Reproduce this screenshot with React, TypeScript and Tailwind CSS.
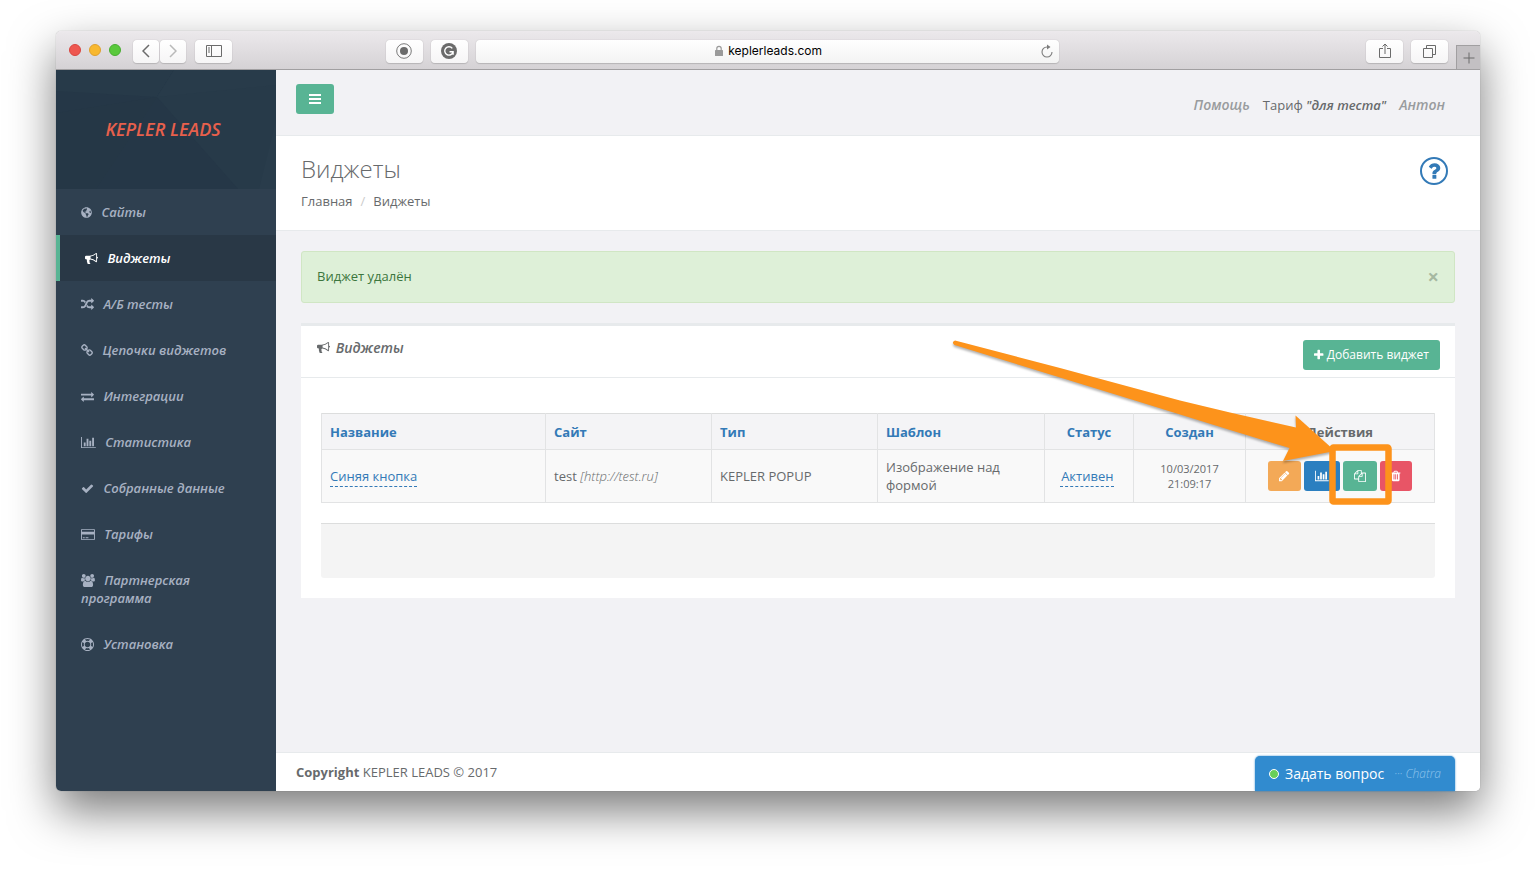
import type { ReactNode } from "react";
import { FaGlobeAmericas } from "react-icons/fa";

const icons = {
  bullhorn: {
    box: "0 0 1792 1792",
    d: "M1664 640q53 0 90.5 37.5t37.5 90.5-37.5 90.5-90.5 37.5v384q0 52-38 90t-90 38q-417-347-812-380-58 19-91 66t-31 100.5 40 92.5q-20 33-23 65.5t6 58 33.5 55 48 50 61.5 50.5q-29 58-111.5 83t-168.5 11.5-132-55.5q-7-23-29.5-87.5t-32-94.5-23-89-15-101 3.5-98.5 22-110.5h-122q-66 0-113-47t-47-113v-192q0-66 47-113t113-47h480q435 0 896-384 52 0 90 38t38 90v384zm-128 604v-954q-394 302-768 343v270q377 42 768 341z",
  },
  random: {
    box: "0 0 1792 1792",
    d: "M666 481q-60 92-137 273-22-45-37-72.5t-40.5-63.5-51-56.5-63-35-81.5-14.5h-224q-14 0-23-9t-9-23v-192q0-14 9-23t23-9h224q250 0 410 225zm1126 799q0 14-9 23l-320 320q-9 9-23 9-13 0-22.5-9.5t-9.5-22.5v-192q-32 0-85 .5t-81 1-73-1-71-5-64-10.5-63-18.5-58-28.5-59-40-55-53.5-56-69.5q59-93 136-273 22 45 37 72.5t40.5 63.5 51 56.5 63 35 81.5 14.5h256v-192q0-14 9-23t23-9q12 0 24 10l319 319q9 9 9 23zm0-896q0 14-9 23l-320 320q-9 9-23 9-13 0-22.5-9.5t-9.5-22.5v-192h-256q-48 0-87 15t-69 45-51 61.5-45 77.5q-32 62-78 171-29 66-49.5 111t-54 105-64 100-74 83-90 68.5-106.5 42-128 16.5h-224q-14 0-23-9t-9-23v-192q0-14 9-23t23-9h224q48 0 87-15t69-45 51-61.5 45-77.5q32-62 78-171 29-66 49.5-111t54-105 64-100 74-83 90-68.5 106.5-42 128-16.5h256v-192q0-14 9-23t23-9q12 0 24 10l319 319q9 9 9 23z",
  },
  chain: {
    box: "64 0 1664 1792",
    d: "M1520 1216q0-40-28-68l-208-208q-28-28-68-28-42 0-72 32 3 3 19 18.5t21.5 21.5 15 19 13 25.5 3.5 27.5q0 40-28 68t-68 28q-15 0-27.5-3.5t-25.5-13-19-15-21.5-21.5-18.5-19q-33 31-33 73 0 40 28 68l206 207q27 27 68 27 40 0 68-26l147-146q28-28 28-67zm-703-705q0-40-28-68l-206-207q-28-28-68-28-39 0-68 27l-147 146q-28 28-28 67 0 40 28 68l208 208q27 27 68 27 42 0 72-31-3-3-19-18.5t-21.5-21.5-15-19-13-25.5-3.5-27.5q0-40 28-68t68-28q15 0 27.5 3.5t25.5 13 19 15 21.5 21.5 18.5 19q33-31 33-73zm895 705q0 120-85 203l-147 146q-83 83-203 83-121 0-204-85l-206-207q-83-83-83-203 0-123 88-209l-88-88q-86 88-208 88-120 0-204-84l-208-208q-84-84-84-204t85-203l147-146q83-83 203-83 121 0 204 85l206 207q83 83 83 203 0 123-88 209l88 88q86-88 208-88 120 0 204 84l208 208q84 84 84 204z",
  },
  exchange: {
    box: "0 0 1792 1792",
    d: "M1792 1184v192q0 13-9.5 22.5t-22.5 9.5h-1376v192q0 13-9.5 22.5t-22.5 9.5q-12 0-24-10l-319-320q-9-9-9-22 0-14 9-23l320-320q9-9 23-9 13 0 22.5 9.5t9.5 22.5v192h1376q13 0 22.5 9.5t9.5 22.5zm0-544q0 14-9 23l-320 320q-9 9-23 9-13 0-22.5-9.5t-9.5-22.5v-192h-1376q-13 0-22.5-9.5t-9.5-22.5v-192q0-13 9.5-22.5t22.5-9.5h1376v-192q0-14 9-23t23-9q12 0 24 10l319 319q9 9 9 23z",
  },
  chart: {
    box: "0 0 2048 1792",
    d: "M640 896v512h-256v-512h256zm384-512v1024h-256v-1024h256zm1024 1152v128h-2048v-1536h128v1408h1920zm-640-896v768h-256v-768h256zm384-384v1152h-256v-1152h256z",
  },
  check: {
    box: "0 0 1792 1792",
    d: "M1671 566q0 40-28 68l-724 724-136 136q-28 28-68 28t-68-28l-136-136-362-362q-28-28-28-68t28-68l136-136q28-28 68-28t68 28l294 295 656-657q28-28 68-28t68 28l136 136q28 28 28 68z",
  },
  card: {
    box: "0 0 1920 1792",
    d: "M1760 128q66 0 113 47t47 113v1216q0 66-47 113t-113 47h-1600q-66 0-113-47t-47-113v-1216q0-66 47-113t113-47h1600zm-1600 128q-13 0-22.5 9.5t-9.5 22.5v224h1664v-224q0-13-9.5-22.5t-22.5-9.5h-1600zm1600 1280q13 0 22.5-9.5t9.5-22.5v-608h-1664v608q0 13 9.5 22.5t22.5 9.5h1600zm-1504-128v-128h256v128h-256zm384 0v-128h384v128h-384z",
  },
  users: {
    box: "0 0 1920 1792",
    d: "M593 896q-162 5-265 128h-134q-82 0-138-40.5t-56-118.5q0-353 124-353 6 0 43.5 21t97.5 42.5 119 21.5q67 0 133-23-5 37-5 66 0 139 81 256zm1071 637q0 120-73 189.5t-194 69.5h-874q-121 0-194-69.5t-73-189.5q0-53 3.5-103.5t14-109 26.5-108.5 43-97.5 62-81 85.5-53.5 111.5-20q10 0 43 21.5t73 48 107 48 135 21.5 135-21.5 107-48 73-48 43-21.5q61 0 111.5 20t85.5 53.5 62 81 43 97.5 26.5 108.5 14 109 3.5 103.5zm-1024-1277q0 106-75 181t-181 75-181-75-75-181 75-181 181-75 181 75 75 181zm704 384q0 159-112.5 271.5t-271.5 112.5-271.5-112.5-112.5-271.5 112.5-271.5 271.5-112.5 271.5 112.5 112.5 271.5zm576 225q0 78-56 118.5t-138 40.5h-134q-103-123-265-128 81-117 81-256 0-29-5-66 66 23 133 23 59 0 119-21.5t97.5-42.5 43.5-21q124 0 124 353zm-128-609q0 106-75 181t-181 75-181-75-75-181 75-181 181-75 181 75 75 181z",
  },
  ring: {
    box: "0 0 1792 1792",
    d: "M896 0q182 0 348 71t286 191 191 286 71 348-71 348-191 286-286 191-348 71-348-71-286-191-191-286-71-348 71-348 191-286 286-191 348-71zm0 128q-190 0-361 90l194 194q82-28 167-28t167 28l194-194q-171-90-361-90zm-678 1129l194-194q-28-82-28-167t28-167l-194-194q-90 171-90 361t90 361zm678 407q190 0 361-90l-194-194q-82 28-167 28t-167-28l-194 194q171 90 361 90zm0-384q159 0 271.5-112.5t112.5-271.5-112.5-271.5-271.5-112.5-271.5 112.5-112.5 271.5 112.5 271.5 271.5 112.5zm484-217l194 194q90-171 90-361t-90-361l-194 194q28 82 28 167t-28 167z",
  },
  pencil: {
    box: "128 0 1536 1792",
    d: "M491 1536l91-91-235-235-91 91v107h128v128h107zm523-928q0-22-22-22-10 0-17 7l-542 542q-7 7-7 17 0 22 22 22 10 0 17-7l542-542q7-7 7-17zm-54-192l416 416-832 832h-416v-416zm683 96q0 53-37 90l-166 166-416-416 166-165q36-38 90-38 53 0 91 38l235 234q37 39 37 91z",
  },
  files: {
    box: "0 0 1792 1792",
    d: "M1696 384q40 0 68 28t28 68v1216q0 40-28 68t-68 28h-960q-40 0-68-28t-28-68v-288h-544q-40 0-68-28t-28-68v-672q0-40 20-88t48-76l408-408q28-28 76-48t88-20h416q40 0 68 28t28 68v328q68-40 128-40h416zm-544 213l-299 299h299v-299zm-640-384l-299 299h299v-299zm196 647l316-316v-416h-384v416q0 40-28 68t-68 28h-416v640h512v-256q0-40 20-88t48-76zm956 804v-1152h-384v416q0 40-28 68t-68 28h-416v640h896z",
  },
  trash: {
    box: "192 0 1408 1792",
    d: "M704 1376v-704q0-14-9-23t-23-9h-64q-14 0-23 9t-9 23v704q0 14 9 23t23 9h64q14 0 23-9t9-23zm256 0v-704q0-14-9-23t-23-9h-64q-14 0-23 9t-9 23v704q0 14 9 23t23 9h64q14 0 23-9t9-23zm256 0v-704q0-14-9-23t-23-9h-64q-14 0-23 9t-9 23v704q0 14 9 23t23 9h64q14 0 23-9t9-23zm-544-992h448l-48-117q-7-9-17-11h-317q-10 2-17 11zm928 32v64q0 14-9 23t-23 9h-96v948q0 83-47 143.5t-113 60.5h-832q-66 0-113-58.5t-47-141.5v-952h-96q-14 0-23-9t-9-23v-64q0-14 9-23t23-9h309l70-167q15-37 54-63t79-26h320q40 0 79 26t54 63l70 167h309q14 0 23 9t9 23z",
  },
  plus: {
    box: "192 0 1408 1792",
    d: "M1600 736v192q0 40-28 68t-68 28h-416v416q0 40-28 68t-68 28h-192q-40 0-68-28t-28-68v-416h-416q-40 0-68-28t-28-68v-192q0-40 28-68t68-28h416v-416q0-40 28-68t68-28h192q40 0 68 28t28 68v416h416q40 0 68 28t28 68z",
  },
  question: {
    box: "0 0 1792 1792",
    d: "M1088 1256v240q0 16-12 28t-28 12h-240q-16 0-28-12t-12-28v-240q0-16 12-28t28-12h240q16 0 28 12t12 28zm316-600q0 54-15.5 101t-35 76.5-55 59.5-57.5 43.5-61 35.5q-41 23-68.5 65t-27.5 67q0 17-12 32.5t-28 15.5h-240q-15 0-25.5-18.5t-10.5-37.5v-45q0-83 65-156.5t143-108.5q59-27 84-56t25-76q0-42-46.5-74t-107.5-32q-65 0-108 29-35 25-107 115-13 16-31 16-12 0-25-8l-164-125q-13-10-15.5-25t5.500-28q160-266 464-266 80 0 161 31t146 83 106 127.5 41 158.5z",
  },
};

type IconName = keyof typeof icons;

function Icon({ name, className }: { name: IconName; className: string }) {
  return (
    <svg viewBox={icons[name].box} fill="currentColor" className={className} aria-hidden="true">
      <path d={icons[name].d} />
    </svg>
  );
}

const menu: { label: string; icon?: IconName }[] = [
  { label: "Сайты" },
  { label: "Виджеты", icon: "bullhorn" },
  { label: "А/Б тесты", icon: "random" },
  { label: "Цепочки виджетов", icon: "chain" },
  { label: "Интеграции", icon: "exchange" },
  { label: "Статистика", icon: "chart" },
  { label: "Собранные данные", icon: "check" },
  { label: "Тарифы", icon: "card" },
  { label: "Партнерская программа", icon: "users" },
  { label: "Установка", icon: "ring" },
];

function BarButton({ label, className, children }: { label: string; className: string; children: ReactNode }) {
  return (
    <button
      aria-label={label}
      className={`flex h-[23px] shrink-0 items-center justify-center rounded bg-gradient-to-b from-white to-[#f6f5f6] text-[#6b6b6b] shadow-[0_0_1px_#a9a7a9,0_1px_1px_#b9b7b9] ${className}`}
    >
      {children}
    </button>
  );
}

function BrowserBar() {
  return (
    <div className="flex h-[39px] items-center rounded-t-[5px] border-b border-[#a19fa1] bg-gradient-to-b from-[#ece9ec] to-[#d5d2d5] pt-0.5 pl-[13px]">
      <div className="flex gap-2 pb-0.5">
        <span className="size-3 rounded-full border border-[#d9453f] bg-[#ee5750]" />
        <span className="size-3 rounded-full border border-[#e0a02c] bg-[#f8b82f]" />
        <span className="size-3 rounded-full border border-[#48ad31] bg-[#5ac93c]" />
      </div>
      <div className="ml-3 flex gap-px">
        <BarButton label="Назад" className="w-[26px]">
          <svg viewBox="0 0 8 14" className="h-3.5 w-2" fill="none" stroke="currentColor" strokeWidth="1.500">
            <path d="M7 1L1 7l6 6" />
          </svg>
        </BarButton>
        <BarButton label="Вперёд" className="w-[26px]">
          <svg viewBox="0 0 8 14" className="h-3.5 w-2" fill="none" stroke="#b9b9b9" strokeWidth="1.500">
            <path d="M1 1l6 6-6 6" />
          </svg>
        </BarButton>
      </div>
      <BarButton label="Боковая панель" className="ml-[9px] w-[37px]">
        <svg viewBox="0 0 16 12" className="h-3 w-4" fill="none" stroke="currentColor">
          <path d="M.5.5h15v11H.5zM5.500 .5v11M2 3h2M2 5h2M2 7h2" />
        </svg>
      </BarButton>

      <div className="flex-1" />

      <BarButton label="Запись" className="w-[37px]">
        <svg viewBox="0 0 16 16" className="size-4">
          <circle cx="8" cy="8" r="7.300" fill="none" stroke="currentColor" strokeWidth=".9" />
          <circle cx="8" cy="8" r="4" fill="currentColor" />
        </svg>
      </BarButton>
      <BarButton label="Grammarly" className="ml-2 w-[37px]">
        <svg viewBox="0 0 16 16" className="size-4" fill="none">
          <circle cx="8" cy="8" r="8" fill="currentColor" />
          <path d="M11.300 5.400A4.200 4.200 0 1 0 12 9M8.500 8.800h3.600v2.900" stroke="#fff" strokeWidth="1.400" />
        </svg>
      </BarButton>
      <div className="ml-2 flex h-[23px] w-[583px] items-center rounded bg-gradient-to-b from-white to-[#f3f3f3] pr-1.5 pl-5 shadow-[0_0_1px_#a9a7a9,0_1px_1px_#b9b7b9]">
        <label className="flex flex-1 items-center justify-center gap-1">
          <svg viewBox="0 0 10 12" className="h-3 w-2.5" fill="#9a9a9a" aria-label="Адрес">
            <rect x="1" y="5" width="8" height="6" rx=".5" />
            <path d="M2.800 5.500V3.500a2.200 2.200 0 0 1 4.400 0v2" fill="none" stroke="#9a9a9a" strokeWidth="1.200" />
          </svg>
          <input
            type="text"
            defaultValue="keplerleads.com"
            className="field-sizing-content bg-transparent font-[Inter,sans-serif] text-[12px] leading-4 text-black outline-none"
          />
        </label>
        <button aria-label="Обновить" className="text-[#7c7c7c]">
          <svg viewBox="0 0 12 14" className="h-3.5 w-3" fill="none" stroke="currentColor" strokeWidth="1.100">
            <path d="M7 3H6a5 5 0 1 0 5 5" />
            <path d="M6 .5L9.500 3 6 5.500z" fill="currentColor" stroke="none" />
          </svg>
        </button>
      </div>

      <div className="flex-[2]" />

      <BarButton label="Поделиться" className="w-[37px]">
        <svg viewBox="0 0 12 16" className="h-4 w-3" fill="none" stroke="currentColor">
          <path d="M4 5.500H.5v9h11v-9H8M6 11V1M3.500 3.500L6 1l2.500 2.500" />
        </svg>
      </BarButton>
      <BarButton label="Все вкладки" className="ml-2 w-[37px]">
        <svg viewBox="0 0 13 13" className="size-[13px]" fill="none" stroke="currentColor">
          <path d="M.5 3.500h9v9h-9zM3.500 3.500v-3h9v9h-3" />
        </svg>
      </BarButton>
      <button
        aria-label="Новая вкладка"
        className="ml-2 flex h-6 w-6 items-center justify-center self-end border-t border-l border-[#a19fa1] bg-[#c3c0c3] text-[#6b6b6b]"
      >
        <svg viewBox="0 0 12 12" className="size-3" fill="none" stroke="currentColor">
          <path d="M6 .5v11M.5 6h11" />
        </svg>
      </button>
    </div>
  );
}

function Sidebar() {
  return (
    <aside className="w-[220px] shrink-0 rounded-bl-[5px] bg-[#2f4050]">
      <div className="relative flex h-[119px] items-center justify-center bg-[#253747]">
        <svg viewBox="0 0 220 119" preserveAspectRatio="none" className="absolute inset-0 size-full" aria-hidden="true">
          <path d="M0 0H118L101 27 0 21z" fill="#273a49" />
          <path d="M118 0H220V119H182L101 27z" fill="#273a49" />
          <path d="M118 0H220V15L101 27z" fill="#283b4a" />
          <path d="M220 50V119H203z" fill="#293c4b" />
          <path d="M0 43L101 27 40 119H0z" fill="#253746" />
        </svg>
        <a href="#" className="relative pr-1.5 pb-0.5 text-[18px] font-semibold text-[#e8604c] italic">
          KEPLER LEADS
        </a>
      </div>
      <nav>
        {menu.map((item) => (
          <a
            key={item.label}
            href="#"
            className={
              item.label === "Виджеты"
                ? "block border-l-4 border-[#58b494] bg-[#293846] py-3.5 pr-5 pl-[25px] font-semibold text-white italic"
                : "block py-3.5 pr-5 pl-[25px] font-semibold text-[#a7b1c2] italic"
            }
          >
            {item.icon ? (
              <Icon name={item.icon} className="mr-1.5 mb-0.5 inline h-[13px] w-auto" />
            ) : (
              <FaGlobeAmericas className="mr-1.5 mb-0.5 inline h-[11px] w-[11px]" />
            )}{" "}
            {item.label}
          </a>
        ))}
      </nav>
    </aside>
  );
}

function Navbar() {
  return (
    <header className="flex items-start justify-between border-b border-[#e7eaec] pt-3.5 pr-[35px] pb-[21px] pl-5">
      <button aria-label="Меню" className="flex h-[30px] w-[38px] items-center justify-center rounded-[3px] bg-[#58b494]">
        <svg viewBox="0 0 12 10" className="h-2.5 w-3" fill="#fff">
          <path d="M0 0h12v2H0zM0 4h12v2H0zM0 8h12v2H0z" />
        </svg>
      </button>
      <div className="flex items-center gap-[13px] pt-3 leading-[18px]">
        <a href="#" className="text-[14px] font-semibold text-[#999c9e] italic">
          Помощь
        </a>
        <span>
          Тариф <em className="font-semibold">"для теста"</em>
        </span>
        <a href="#" className="text-[14px] font-semibold text-[#999c9e] italic">
          Антон
        </a>
      </div>
    </header>
  );
}

function PageHeading() {
  return (
    <div className="flex items-center justify-between border-b border-[#e7eaec] bg-white py-5 pr-8 pl-[25px]">
      <div>
        <h1 className="text-[24px] leading-[26px] font-light">Виджеты</h1>
        <ol className="mt-2.5 flex">
          <li>
            <a href="#">Главная</a>
          </li>
          <li className="px-2 text-[#ccc]">/</li>
          <li>Виджеты</li>
        </ol>
      </div>
      <a href="#" aria-label="Справка" className="mb-6 flex size-7 items-center justify-center rounded-full border-[2px] border-[#337ab7] text-[#337ab7]">
        <Icon name="question" className="size-[22px]" />
      </a>
    </div>
  );
}

function WidgetsTable() {
  return (
    <table className="w-full table-fixed border-collapse border border-[#e2e3e4] text-left">
      <colgroup>
        <col className="w-[224px]" />
        <col className="w-[166px]" />
        <col className="w-[166px]" />
        <col className="w-[167px]" />
        <col className="w-[89px]" />
        <col className="w-[112px]" />
        <col className="w-[189px]" />
      </colgroup>
      <thead>
        <tr className="h-9 border-t border-b border-[#dcdddd] bg-[#f4f4f6] text-[#337ab7] [&>th]:border-x [&>th]:border-[#e2e3e4] [&>th]:px-2">
          <th><a href="#">Название</a></th>
          <th><a href="#">Сайт</a></th>
          <th><a href="#">Тип</a></th>
          <th><a href="#">Шаблон</a></th>
          <th className="text-center"><a href="#">Статус</a></th>
          <th className="text-center"><a href="#">Создан</a></th>
          <th className="text-center text-[#676a6c]">Действия</th>
        </tr>
      </thead>
      <tbody>
        <tr className="bg-[#f9f9f9] [&>td]:border [&>td]:border-[#e2e3e4] [&>td]:p-2">
          <td>
            <a href="#" className="border-b border-dashed border-[#337ab7] pb-px text-[#337ab7]">Синяя кнопка</a>
          </td>
          <td>
            test <em className="font-light">[http://test.ru]</em>
          </td>
          <td>KEPLER POPUP</td>
          <td>Изображение над формой</td>
          <td className="text-center">
            <a href="#" className="border-b border-dashed border-[#337ab7] px-px pb-px text-[#337ab7]">Активен</a>
            &nbsp;
          </td>
          <td className="text-center text-[11px] leading-[15px]">
            10/03/2017
            <br />
            21:09:17
          </td>
          <td>
            <div className="flex justify-center gap-[3px] text-white">
              <button aria-label="Изменить" className="flex h-[30px] w-[33px] items-center justify-center rounded-[3px] bg-[#f3a957]">
                <Icon name="pencil" className="h-3 w-auto" />
              </button>
              <button aria-label="Статистика" className="flex h-[30px] w-9 items-center justify-center rounded-[3px] bg-[#2b7fc0]">
                <Icon name="chart" className="h-3 w-auto" />
              </button>
              <button aria-label="Копировать" className="flex h-[30px] w-[34px] items-center justify-center rounded-[3px] bg-[#58b494]">
                <Icon name="files" className="h-3 w-auto" />
              </button>
              <button aria-label="Удалить" className="flex h-[30px] w-8 items-center justify-center rounded-[3px] bg-[#e85566]">
                <Icon name="trash" className="h-3 w-auto" />
              </button>
            </div>
          </td>
        </tr>
      </tbody>
    </table>
  );
}

// Arrow and frame pointing at the copy button
function Pointer() {
  return (
    <svg
      viewBox="940 330 460 180"
      className="pointer-events-none absolute top-1.5 right-[55px] h-[180px] w-[460px]"
      aria-hidden="true"
    >
      <path
        d="M955 338.500L1060 366 1180 398.500 1230 410.500 1296 425.500 1295.500 413.500 1335 449 1283 459 1289.500 446 1230 428 1130 397 954.500 343Q951 340 955 338.500z"
        fill="#fd931b"
        className="drop-shadow-[0_2px_1px_rgba(0,0,0,0.3)]"
      />
      <rect x="1332.500" y="445.500" width="56" height="54" rx="1" fill="none" stroke="#fd931b" strokeWidth="6.500" />
    </svg>
  );
}

function WidgetsPanel() {
  return (
    <section className="relative border-t-[3px] border-[#e7eaec] bg-white">
      <div className="flex h-[52px] items-start justify-between border-b border-[#e7eaec] pt-3.5 pr-[15px] pl-4">
        <h2 className="text-[14px] leading-4 font-semibold italic">
          <Icon name="bullhorn" className="mr-0.5 mb-1 inline h-[13px] w-auto" /> Виджеты
        </h2>
        <button className="flex h-[30px] items-center gap-[3px] rounded-[3px] bg-[#58b494] px-[11px] text-[12px] text-white">
          <Icon name="plus" className="h-3 w-auto" />
          Добавить виджет
        </button>
      </div>
      <div className="px-5 pt-[35px] pb-5">
        <WidgetsTable />
        <div className="mt-5 h-[55px] rounded-b-[3px] border-t border-[#dcdddd] bg-[#f4f4f4]" />
      </div>
      <Pointer />
    </section>
  );
}

export default function App() {
  return (
    <div className="flex min-h-screen flex-col bg-white px-14 pt-[31px] pb-20 font-['Open_Sans',sans-serif] text-[13px] leading-[18px] text-[#676a6c]">
      <div className="flex flex-1 flex-col rounded-[5px] shadow-[0_20px_46px_rgba(0,0,0,0.52),0_0_1px_rgba(0,0,0,0.4)]">
        <BrowserBar />
        <div className="flex flex-1">
          <Sidebar />
          <main className="flex min-w-0 flex-1 flex-col rounded-br-[5px] bg-[#f2f2f5]">
            <Navbar />
            <PageHeading />
            <div className="flex-1 px-[25px] py-5">
              <div role="alert" className="mb-5 flex justify-between rounded-[3px] border border-[#d0e6c4] bg-[#def0d8] p-[15px] text-[#3c763d]">
                Виджет удалён
                <button aria-label="Закрыть" className="text-[20px] leading-5 font-bold text-[#a5b8a1]">
                  ×
                </button>
              </div>
              <WidgetsPanel />
            </div>
            <footer className="relative rounded-br-[5px] border-t border-[#e7eaec] bg-white px-5 py-2.5">
              <strong>Copyright</strong> KEPLER LEADS © 2017
              <button className="absolute right-[25px] bottom-0 flex h-[35px] w-[200px] items-center rounded-t-[5px] bg-[#318bcf] pr-3.5 pl-3.5 text-[14px] text-white shadow-[0_0_2px_#318bcf]">
                <span className="mr-1.5 size-2.5 rounded-full border border-white bg-[#68cf58]" />
                Задать вопрос
                <span className="ml-auto text-[12px] font-light text-[#8fc4ec] italic">··· Chatra</span>
              </button>
            </footer>
          </main>
        </div>
      </div>
    </div>
  );
}
